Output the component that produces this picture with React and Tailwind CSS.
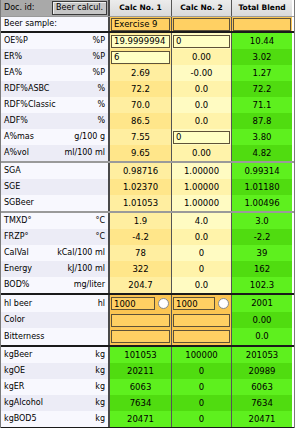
import React from "react";

const sections = [
  {
    sep: "border-b-2 border-[#9a9a9a]",
    rows: [
      ["OE%P", "%P", { in: "19.9999994" }, { in: "0" }, "10.44"],
      ["ER%", "%P", { in: "6" }, "0.00", "3.02"],
      ["EA%", "%P", "2.69", "-0.00", "1.27"],
      ["RDF%ASBC", "%", "72.2", "0.0", "72.2"],
      ["RDF%Classic", "%", "70.0", "0.0", "71.1"],
      ["ADF%", "%", "86.5", "0.0", "87.8"],
      ["A%mas", "g/100 g", "7.55", { in: "0" }, "3.80"],
      ["A%vol", "ml/100 ml", "9.65", "0.00", "4.82"],
    ],
  },
  {
    sep: "border-b-2 border-[#9a9a9a]",
    rows: [
      ["SGA", "", "0.98716", "1.00000", "0.99314"],
      ["SGE", "", "1.02370", "1.00000", "1.01180"],
      ["SGBeer", "", "1.01053", "1.00000", "1.00496"],
    ],
  },
  {
    sep: "border-b-2 border-[#1a1a1a]",
    rows: [
      ["TMXD°", "°C", "1.9", "4.0", "3.0"],
      ["FRZP°", "°C", "-4.2", "0.0", "-2.2"],
      ["CalVal", "kCal/100 ml", "78", "0", "39"],
      ["Energy", "kJ/100 ml", "322", "0", "162"],
      ["BOD%", "mg/liter", "204.7", "0.0", "102.3"],
    ],
  },
  {
    sep: "border-b-2 border-[#1a1a1a]",
    orange: true,
    rows: [
      ["hl beer", "hl", { in: "1000", radio: true }, { in: "1000", radio: true }, "2001", "h-[17px]"],
      ["Color", "", { in: "" }, { in: "" }, "0.00"],
      ["Bitterness", "", { in: "" }, { in: "" }, "0.0", "h-[17px]"],
    ],
  },
  {
    sep: "border-b border-[#1a1a1a]",
    green: true,
    rows: [
      ["kgBeer", "kg", "101053", "100000", "201053"],
      ["kgOE", "kg", "20211", "0", "20989"],
      ["kgER", "kg", "6063", "0", "6063"],
      ["kgAlcohol", "kg", "7634", "0", "7634"],
      ["kgBOD5", "kg", "20471", "0", "20471"],
    ],
  },
];

function Box({ value, orange, radio }) {
  return (
    <div className="flex items-center w-full pl-[1px] pr-[1px] gap-[3px]">
      <input
        readOnly
        value={value}
        className={
          "h-[13px] min-w-0 flex-1 border border-[#5e5238] px-[2px] text-[8.5px] leading-none text-black outline-none " +
          (orange ? "bg-[#ffd063]" : "bg-[#ffffc4]")
        }
      />
      {radio && (
        <span className="w-[11px] h-[11px] mr-[1px] rounded-full border border-[#8a8a8a] bg-white shrink-0" />
      )}
    </div>
  );
}

function Cell({ v, bg, w, orange = false, border = true }) {
  return (
    <div className={`${w} ${bg} flex items-center justify-center ${border ? "border-r border-[#555]" : ""}`}>
      {typeof v === "string" ? (
        <span className="text-[8.5px]">{v}</span>
      ) : (
        <Box value={v.in} radio={v.radio} orange={orange} />
      )}
    </div>
  );
}

function Section({ sec }) {
  return (
    <div className={sec.sep}>
      {sec.rows.map((r, i) => {
        const even = i % 2 === 0;
        const lab = even ? "bg-[#f8f8fe]" : "bg-[#ececf6]";
        const green = even ? "bg-[#5ef01e]" : "bg-[#50dc10]";
        let c1 = even ? "bg-[#ffeea0]" : "bg-[#ffe68a]";
        let c2 = even ? "bg-[#fffbc2]" : "bg-[#fff3aa]";
        if (sec.orange) c1 = c2 = "bg-[#fbc552]";
        if (sec.green) c1 = c2 = green;
        return (
          <div key={r[0]} className={`flex ${r[5] || "h-[16px]"}`}>
            <div className={`w-[109px] ${lab} flex items-center justify-between px-[3px] border-r-2 border-[#4a4a4a]`}>
              <span>{r[0]}</span>
              <span>{r[1]}</span>
            </div>
            <Cell v={r[2]} bg={c1} w="w-[62px]" orange={!!sec.orange} />
            <Cell v={r[3]} bg={c2} w="w-[60px]" orange={!!sec.orange} />
            <Cell v={r[4]} bg={green} w="w-[60px]" border={false} />
          </div>
        );
      })}
    </div>
  );
}

export default function App() {
  return (
    <div className="w-[295px] h-[430px] bg-white font-['DejaVu_Sans',sans-serif] text-[8px] text-black leading-none">
      <div className="border-l border-r border-[#7a7a7a]">
        {/* header */}
        <div className="flex h-[17px] border-b border-[#9a9a9a]">
          <div className="w-[109px] bg-[#a9a9a9] flex items-center justify-between pl-[3px] pr-[1px] border-r-2 border-[#4a4a4a]">
            <span>Doc. id:</span>
            <span className="h-[14px] px-[3px] flex items-center bg-[#c6c6c6] border border-[#3a3a3a] shadow-[inset_1px_1px_0_#eeeeee]">
              Beer calcul.
            </span>
          </div>
          {["Calc No. 1", "Calc No. 2", "Total Blend"].map((t, i) => (
            <div
              key={t}
              className={`${i === 0 ? "w-[62px]" : "w-[60px]"} bg-gradient-to-b from-[#ececec] to-[#dadada] flex items-center justify-center font-bold text-[7.5px] ${i < 2 ? "border-r border-[#555]" : ""}`}
            >
              {t}
            </div>
          ))}
        </div>
        {/* beer sample */}
        <div className="flex h-[16px] border-b-2 border-[#1a1a1a]">
          <div className="w-[109px] bg-[#f8f8fe] flex items-center px-[3px] border-r-2 border-[#4a4a4a]">
            Beer sample:
          </div>
          <Cell v={{ in: "Exercise 9" }} bg="bg-[#fbc552]" w="w-[62px]" orange />
          <Cell v={{ in: "" }} bg="bg-[#fbc552]" w="w-[60px]" orange />
          <Cell v={{ in: "" }} bg="bg-[#fbc552]" w="w-[60px]" orange border={false} />
        </div>
        {sections.map((s, i) => (
          <Section key={i} sec={s} />
        ))}
      </div>
    </div>
  );
}
